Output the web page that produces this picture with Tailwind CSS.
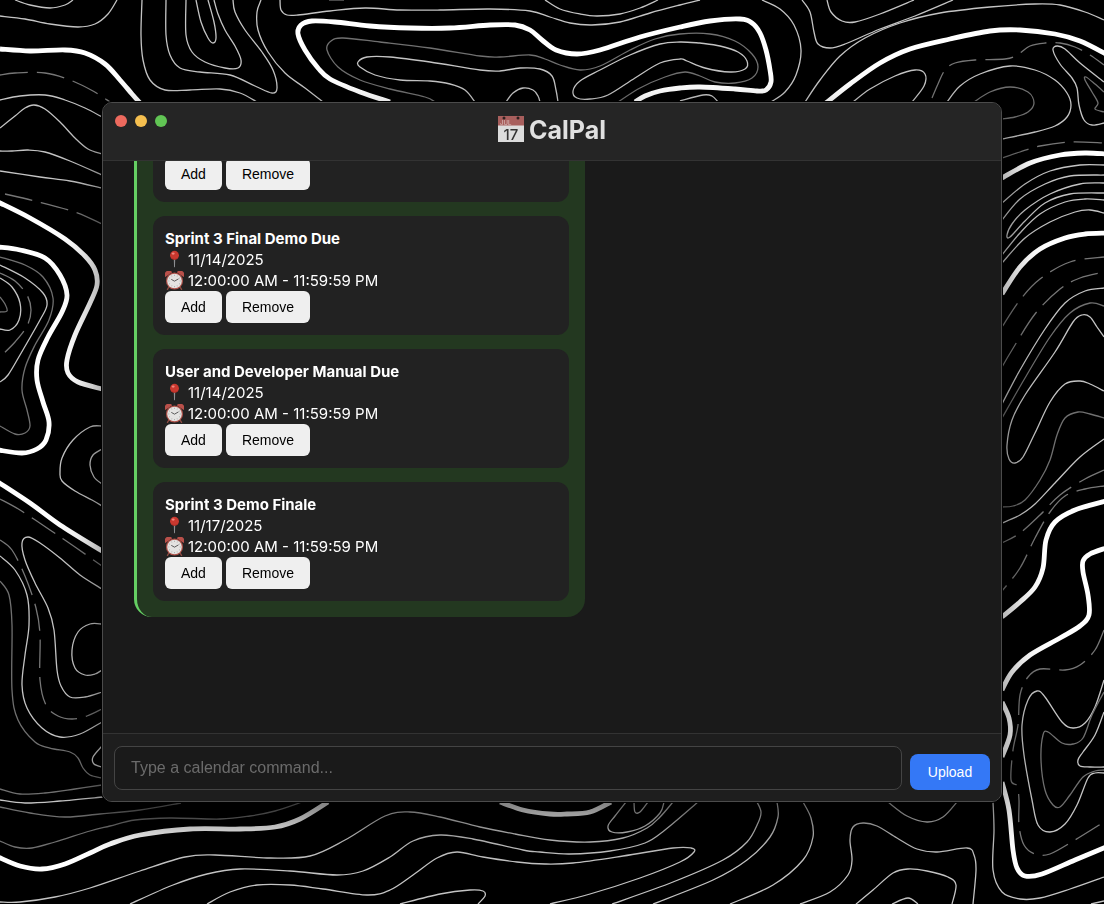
<!DOCTYPE html>
<html lang="en">
<head>
    <meta charset="UTF-8">
    <meta name="viewport" content="width=device-width, initial-scale=1.0">
    <title>CalPal</title>
    <script src="https://cdn.jsdelivr.net/npm/@tailwindcss/browser@4"></script>
</head>
<body class="bg-black font-['Inter','Liberation_Sans',sans-serif] text-white overflow-hidden">

    <!-- Icons -->
    <svg class="hidden" aria-hidden="true">
        <symbol id="pin" viewBox="0 0 20 20">
            <path d="M9.2 8h1.6l-.3 9.2-.5 1.6-.5-1.6z" fill="#8d8f92"/>
            <circle cx="10" cy="5.6" r="4.7" fill="#c9382f"/>
            <path d="M6 7.8a4.7 4.7 0 0 0 8 0 6 6 0 0 1-8 0z" fill="#9c211d"/>
            <ellipse cx="8.6" cy="3.8" rx="1.6" ry="1.2" fill="#f0857b"/>
        </symbol>
        <symbol id="clock" viewBox="0 0 20 20">
            <path d="M4.4 16.4 2.6 19.4M15.6 16.4 17.4 19.4" stroke="#8b4a42" stroke-width="1.4" stroke-linecap="round"/>
            <path d="M.4 6.4A4.2 4.2 0 0 1 7.6 1.4z" fill="#b9504a"/>
            <path d="M19.6 6.4A4.2 4.2 0 0 0 12.400 1.4z" fill="#b9504a"/>
            <circle cx="10" cy="10.5" r="9" fill="#ad5149"/>
            <circle cx="10" cy="10.5" r="7.7" fill="#e4e3e1"/>
            <path d="M10 4v1M10 16v1M3.500 10.500h1M15.500 10.500h1M6.800 4.900l.4.800M13.200 4.900l-.4.800M4.400 7.300l.8.400M15.600 7.300l-.8.400M4.400 13.700l.8-.4M15.600 13.700l-.8-.4M6.800 16.100l.4-.8M13.200 16.100l-.4-.8" stroke="#8a8a8a" stroke-width=".7"/>
            <path d="M6.600 8.800 10 10.700l4.200-2.400" fill="none" stroke="#444" stroke-width=".9"/>
        </symbol>
    </svg>

    <!-- Contour map behind the window -->
    <svg id="contours" class="fixed inset-0 w-full h-full" viewBox="0 0 1104 904" preserveAspectRatio="xMidYMid slice" fill="none" aria-hidden="true"></svg>

    <div class="relative flex h-screen p-[102px]">
        <div class="flex-1 min-w-0 flex flex-col overflow-hidden rounded-[10px] border border-[#4b4b4b] bg-[#1a1a1a] shadow-[0_0_0_1px_#000,0_20px_44px_rgba(0,0,0,0.6)]">

            <header class="relative flex items-center justify-center h-[58px] shrink-0 pb-1 bg-[#252525] border-b border-[#333]">
                <div class="absolute left-3 top-3 flex gap-2">
                    <button class="size-3 rounded-full bg-[#ed6a5e]" aria-label="Close"></button>
                    <button class="size-3 rounded-full bg-[#f5bf4f]" aria-label="Minimize"></button>
                    <button class="size-3 rounded-full bg-[#61c554]" aria-label="Zoom"></button>
                </div>
                <h1 class="flex items-center gap-1 text-[25px] leading-8 font-bold text-[#e0e0e0]">
                    <svg class="size-[27px]" viewBox="0 0 27 27" aria-hidden="true">
                        <rect width="26" height="26" fill="#dcdcdc"/>
                        <rect width="26" height="9.5" fill="#a85f5d"/>
                        <circle cx="6" cy="2" r="1.500" fill="#2e2020"/>
                        <circle cx="20" cy="2" r="1.500" fill="#2e2020"/>
                        <text x="2" y="9" font-size="6" font-weight="500" fill="#d9b9b8">JUL</text>
                        <text x="13" y="23.500" font-size="15" font-weight="500" text-anchor="middle" fill="#333">17</text>
                    </svg>
                    CalPal
                </h1>
            </header>

            <main class="flex-1 min-h-0 flex flex-col justify-end overflow-hidden px-[31px] pb-[116px]">
                <section class="w-[54%] shrink-0 flex flex-col gap-[14px] p-4 border-l-3 border-[#65cf63] rounded-[18px] bg-[#233820] text-[15px] leading-[21px]">
                    <article class="p-3 rounded-xl bg-[#222]">
                        <div class="flex gap-1 font-['Liberation_Sans',Arial,sans-serif] text-sm text-black">
                            <button class="h-8 px-4 rounded-md bg-[#efefef]">Add</button>
                            <button class="h-8 px-4 rounded-md bg-[#efefef]">Remove</button>
                        </div>
                    </article>
                    <article class="p-3 rounded-xl bg-[#222]">
                        <h2 class="font-bold">Sprint 3 Final Demo Due</h2>
                        <p class="flex items-center gap-1"><svg class="size-[19px]"><use href="#pin"/></svg>11/14/2025</p>
                        <p class="flex items-center gap-1"><svg class="size-[19px]"><use href="#clock"/></svg>12:00:00 AM - 11:59:59 PM</p>
                        <div class="flex gap-1 font-['Liberation_Sans',Arial,sans-serif] text-sm text-black">
                            <button class="h-8 px-4 rounded-md bg-[#efefef]">Add</button>
                            <button class="h-8 px-4 rounded-md bg-[#efefef]">Remove</button>
                        </div>
                    </article>
                    <article class="p-3 rounded-xl bg-[#222]">
                        <h2 class="font-bold">User and Developer Manual Due</h2>
                        <p class="flex items-center gap-1"><svg class="size-[19px]"><use href="#pin"/></svg>11/14/2025</p>
                        <p class="flex items-center gap-1"><svg class="size-[19px]"><use href="#clock"/></svg>12:00:00 AM - 11:59:59 PM</p>
                        <div class="flex gap-1 font-['Liberation_Sans',Arial,sans-serif] text-sm text-black">
                            <button class="h-8 px-4 rounded-md bg-[#efefef]">Add</button>
                            <button class="h-8 px-4 rounded-md bg-[#efefef]">Remove</button>
                        </div>
                    </article>
                    <article class="p-3 rounded-xl bg-[#222]">
                        <h2 class="font-bold">Sprint 3 Demo Finale</h2>
                        <p class="flex items-center gap-1"><svg class="size-[19px]"><use href="#pin"/></svg>11/17/2025</p>
                        <p class="flex items-center gap-1"><svg class="size-[19px]"><use href="#clock"/></svg>12:00:00 AM - 11:59:59 PM</p>
                        <div class="flex gap-1 font-['Liberation_Sans',Arial,sans-serif] text-sm text-black">
                            <button class="h-8 px-4 rounded-md bg-[#efefef]">Add</button>
                            <button class="h-8 px-4 rounded-md bg-[#efefef]">Remove</button>
                        </div>
                    </article>
                </section>
            </main>

            <form class="shrink-0 flex items-end gap-2 px-[11px] pt-3 pb-[11px] border-t border-[#333] bg-[#1e1e1e] font-['Liberation_Sans',Arial,sans-serif]">
                <input type="text" aria-label="Calendar command" placeholder="Type a calendar command..." class="flex-1 min-w-0 h-11 px-4 rounded-lg border border-[#444] bg-[#1a1a1a] text-base placeholder:text-[#6b6b6b]">
                <button type="button" class="w-20 h-9 rounded-lg bg-[#3478f6] text-sm text-white">Upload</button>
            </form>
        </div>
    </div>

    <script>
        // Each line: kind, then x,y points. t = thick, w = thin, g = faint, d = faint dashed
        const lines = `
w 15,0 30,5 50,8 65,5 73,0
w 0,16 25,19 50,24 78,27 95,24 108,14 117,0
t 0,49 30,51 65,50 85,53 105,64 120,80 132,94 140,103
d 0,75 15,73 45,73 70,80 93,91 110,102
w 0,100 20,96 45,95 65,100 85,108 102,117
w 0,128 15,116 25,108 34,105 45,109 60,122 75,138 88,149 102,154
w 142,0 141,35 143,60 150,80 165,90 190,90 220,89 240,93 257,102
w 166,0 166,35 170,55 180,68 200,72 230,75 255,86 272,93 277,88 273,70 262,52 245,30 235,12 233,0
w 186,0 186,35 192,52 205,62 225,68 238,68 241,60 235,46 225,30 218,14 214,0
w 196,0 201,22 208,38 213,43 216,38 214,22 208,0
w 261,0 257,12 258,30 268,52 285,73 305,88 323,102
w 280,0 281,10 287,15 298,15 330,11 365,8 400,10 440,10 490,9 530,11 550,17 570,23 592,25 620,22 650,13 680,5 700,0
g 329,0 344,0
w 545,0 560,9 580,14 597,16 620,14 640,8 658,0
t 390,102 360,92 330,79 318,68 305,50 298,34 301,25 312,21 335,22 370,26 410,28 450,28 490,25 515,25 530,30 542,40 556,50 577,54 600,50 640,37 680,27 710,21 740,19 752,23 760,33 766,50 770,70 771,82 766,90 757,91 735,89 700,87 680,88 660,91 645,96 635,102
g 435,102 425,97 390,89 360,80 338,67 327,50 331,41 343,38 380,42 430,48 480,56 500,57 530,55 545,59 560,65 580,70 600,66 630,50 655,39 680,34 710,34 735,41 752,54 758,67 752,78 735,83 715,82 700,76 685,72 665,77 640,88 618,102
w 475,102 465,90 450,84 430,81 400,80 375,75 360,67 358,62 367,57 390,57 430,62 480,70 500,71 520,68 540,69 552,76 556,90 558,102
w 506,102 513,93 523,88 533,90 538,96 540,102
w 700,43 680,42 660,44 630,55 600,70 580,81 573,91 577,98 590,99 608,95 635,78 660,63 680,59 687,61 705,68 730,72 745,69 747,61 738,52 720,46 700,43
w 680,101 703,95 712,96 718,102
w 762,0 780,9 794,25 801,50 796,75 785,92 771,102
w 802,0 810,12 814,32 818,44 830,48 845,44 880,29 915,16 953,0
w 827,0 831,12 842,21 855,22 880,14 914,0
w 805,102 820,80 840,56 865,38 900,23 940,13 990,7 1035,4 1060,5 1085,12 1104,20
t 826,103 850,84 880,63 910,49 950,39 990,31 1020,30 1055,34 1080,41 1106,54
w 853,102 870,89 895,76 915,70 925,74 924,86 912,102
d 932,98 938,84 945,70 955,63 975,60 1005,59 1017,55 1030,46 1045,43 1060,43 1075,47 1090,55 1104,65
w 947,102 960,86 980,74 1010,66 1035,70 1055,80 1067,93 1071,105 1067,117 1055,126 1035,132 1002,139
g 974,102 990,92 1010,87 1028,92 1034,103 1028,112 1015,117 1002,119
w 1104,82 1080,63 1065,49 1057,46 1053,50 1060,64 1072,78 1077,88 1079,105 1084,120 1092,125 1104,123
g 1104,92 1095,84 1086,77 1085,80 1092,92 1098,103 1095,109 1104,112
w 0,151 12,151 28,150 45,152 70,161 102,175
w 0,171 40,177 70,181 102,188
d 5,194 35,201 75,212 102,224
t -2,202 30,218 65,239 85,256 95,270 97,285 90,303 75,335 67,360 68,373 78,382 102,389
t -2,247 20,250 45,258 60,275 67,295 62,312 48,337 38,360 37,380 43,402 49,422 46,440 37,449 22,453 -2,450
g 0,257 25,265 43,277 53,298 49,320 35,345 25,368 22,390 27,410 30,426 25,433 15,434 0,426
w 0,265 25,278 43,293 47,305 40,320 20,355 8,375 0,382
d 0,273 15,281 27,295 31,310 27,326 15,342 0,357
w 0,278 12,287 20,303 19,320 10,330 0,329
g 0,297 5,304 7,311 0,312
w 102,426 90,427 73,440 62,458 60,473 62,481 75,491 92,500 102,506
w 102,449 93,455 90,465 94,477 102,484
t -2,482 30,503 60,525 102,551
d 0,499 20,510 50,530 75,547 102,566
w 102,589 80,575 60,558 40,543 28,537 22,543 25,560 35,583 48,608 54,630 57,670 61,686 70,697 85,697 102,692
d 0,540 12,550 25,576 36,608 40,635 40,680 46,705 58,716 72,719 87,716 102,709
w 0,556 15,570 27,595 29,625 25,655 22,685 27,708 42,728 60,737 80,734 102,722
g 0,581 9,595 12,625 12,690 18,720 35,742 50,748 70,752 78,758 83,768 90,775 102,778
w 102,624 90,624 78,632 72,650 75,668 85,675 95,674 102,670
w 102,746 93,757 94,764 102,767
g 0,789 20,794 45,793 75,789 102,785
w 0,800 25,803 60,801 103,797
g 0,807 30,813 65,817 100,814 140,810 181,803
g 0,841 15,847 32,848 55,842 90,831 110,826 135,820 170,818 220,819 250,816 275,811 302,802
t -2,857 20,866 42,869 65,864 90,853 110,844 140,835 190,829 240,829 275,827 300,819 328,802
w 0,902 20,902 55,897 90,888 140,871 185,857 215,855 270,858 310,856 345,840 385,816 410,812 440,817 480,827 515,834 550,840 590,842 623,838 647,828 660,817 673,802
w 626,802 615,816 608,826 612,832 627,832 645,826 660,813 664,802
w 634,802 635,812 640,812 648,802
w 130,904 173,885 207,874 240,869 290,871 337,875 363,871 390,857 413,841 440,835 473,839 523,850 540,852 570,854 610,851 645,843 665,830 698,802
w 207,904 230,892 257,885 290,885 323,889 367,895 390,890 413,875 437,858 457,852 483,857 517,862 545,864 573,863 623,856 673,848 691,848 694,852 680,862 640,878 590,894 550,904
w 400,904 440,894 470,890 483,891 485,896 478,904
t 500,802 523,810 550,814 567,814 590,812 611,802
w 757,802 761,812 758,823 747,842 723,860 673,882 612,904
w 777,802 778,817 770,837 747,860 713,880 653,904
w 803,802 811,818 813,837 803,860 773,885 730,904
w 888,802 907,816 927,822 943,817 957,802
w 800,904 830,892 848,875 852,860 850,840 853,827 863,823 877,826 897,838 917,849 937,852 967,848 974,855 976,870 973,904
w 856,904 873,890 893,873 908,869 927,871 948,877 956,885 952,904
w 892,904 908,898 918,904
w 993,802 994,830 993,870 1002,892 1020,899 1040,898 1070,889 1104,877
w 1091,904 1104,901
d 1002,158 1020,152 1040,146 1070,142 1104,143
t 1002,178 1030,163 1060,155 1085,153 1106,154
w 1002,203 1025,184 1050,171 1080,165 1104,165
w 1002,220 1020,199 1045,184 1070,176 1104,175
w 1104,183 1080,184 1050,194 1025,210 1012,224 1007,235 1010,237 1025,221 1045,203 1070,194 1104,193
w 1002,255 1020,233 1040,214 1065,202 1085,199 1104,200
w 1002,263 1025,238 1050,222 1075,212 1090,210 1104,213
t 1002,294 1020,267 1040,249 1065,238 1085,234 1106,233
d 1002,327 1020,300 1040,279 1070,262 1104,257
d 1002,367 1012,350 1035,314 1060,289 1080,278 1104,272
w 1002,404 1020,370 1045,329 1065,303 1085,291 1104,288
g 1002,418 1025,378 1050,337 1070,313 1090,303 1104,306
w 1104,337 1097,327 1090,317 1082,315 1073,322 1055,352 1025,395 1012,420 1007,445 1009,459 1015,463 1023,457 1035,433 1050,402 1065,384 1080,381 1090,384 1104,391
g 1104,418 1090,414 1078,412 1065,418 1057,435 1050,460 1040,480 1025,500 1013,506 1002,507
w 1104,439 1080,457 1055,483 1035,504 1020,515 1002,523
d 1104,470 1085,479 1060,495 1040,515 1020,533 1002,543
d 1104,486 1085,489 1065,496 1050,512 1035,538 1020,568 1002,591
t 1002,617 1020,602 1035,587 1043,568 1046,540 1055,522 1075,510 1106,501
t 1106,548 1090,554 1083,561 1083,572 1088,595 1089,615 1080,626 1060,638 1030,655 1012,672 1002,690
t 1002,702 1009,718 1010,735 1002,757
t 1002,782 1009,810 1013,850 1017,868 1025,876 1042,874 1075,860 1106,847
d 1104,630 1095,650 1080,665 1065,670 1040,669 1028,677 1020,695 1018,725 1013,750 1011,780 1017,786 1019,800 1019,825 1024,845 1035,854 1050,854 1075,840 1104,822
w 1104,680 1095,707 1085,723 1073,728 1062,722 1045,697 1037,691 1028,700 1022,725 1024,755 1032,800 1038,825 1050,832 1065,824 1077,805 1088,778 1095,773 1104,773
g 1104,692 1092,715 1083,738 1073,744 1062,743 1048,732 1043,735 1041,760 1045,790 1053,805 1060,807 1070,795 1083,777 1095,771 1104,770
w 1104,712 1095,735 1083,752 1078,760 1080,766 1090,767 1104,767`;

        const strokes = {
            t: { stroke: '#fff', 'stroke-width': 4.8 },
            w: { stroke: '#c4c4c4', 'stroke-width': 1.3 },
            g: { stroke: '#707070', 'stroke-width': 1.3 },
            d: { stroke: '#777', 'stroke-width': 1.3, 'stroke-dasharray': '28 9' }
        };

        // Catmull-Rom spline through the points, as cubic beziers
        function smooth(p) {
            let d = `M${p[0]}`;
            for (let i = 0; i < p.length - 1; i++) {
                const a = p[i - 1] || p[i], b = p[i], c = p[i + 1], e = p[i + 2] || c;
                d += `C${b[0] + (c[0] - a[0]) / 6},${b[1] + (c[1] - a[1]) / 6} ${c[0] - (e[0] - b[0]) / 6},${c[1] - (e[1] - b[1]) / 6} ${c}`;
            }
            return d;
        }

        const svg = document.getElementById('contours');
        lines.trim().split('\n').forEach(line => {
            const [kind, ...points] = line.split(' ');
            const path = document.createElementNS('http://www.w3.org/2000/svg', 'path');
            path.setAttribute('d', smooth(points.map(s => s.split(',').map(Number))));
            for (const [name, value] of Object.entries(strokes[kind])) path.setAttribute(name, value);
            svg.appendChild(path);
        });
    </script>
</body>
</html>
